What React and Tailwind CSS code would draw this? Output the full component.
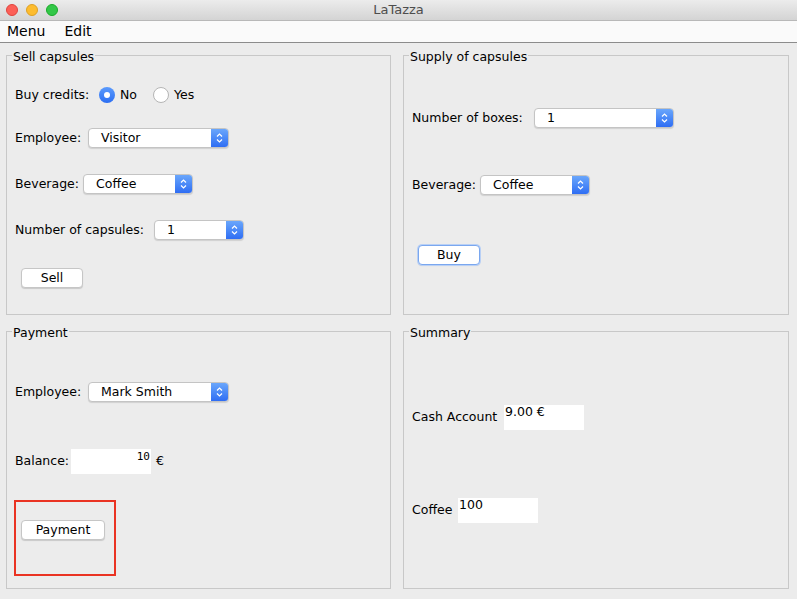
import React from 'react';

const font = "font-['DejaVu_Sans',sans-serif]";

const Combo = ({ value, width }) => (
  <div
    className={`flex h-[20px] items-stretch rounded-[4px] border border-[#c4c4c4] bg-white shadow-[0_1px_1px_rgba(0,0,0,0.12)] ${width}`}
  >
    <span className="flex-1 pl-[12px] leading-[18px]">{value}</span>
    <span className="flex w-[17px] items-center justify-center rounded-r-[3px] bg-gradient-to-b from-[#6aa6fb] to-[#2f6df3]">
      <svg width="7" height="12" viewBox="0 0 7 12" fill="none" stroke="white" strokeWidth="1.2">
        <path d="M1 4.5 L3.5 2 L6 4.5" />
        <path d="M1 7.5 L3.5 10 L6 7.5" />
      </svg>
    </span>
  </div>
);

const Button = ({ children, width, focused }) => (
  <button
    className={`h-[20px] rounded-[4px] bg-white text-center leading-[18px] shadow-[0_1px_1px_rgba(0,0,0,0.15)] ${width} ${
      focused ? 'border border-[#7aa7ef] ring-1 ring-[#b9d0f5]' : 'border border-[#c6c6c6]'
    }`}
  >
    {children}
  </button>
);

const Panel = ({ title, height, children }) => (
  <fieldset className={`border border-[#c8c8c8] px-[8px] ${height}`}>
    <legend className="-ml-[3px] h-[14px] px-px leading-[18px] text-[12.5px]">{title}</legend>
    {children}
  </fieldset>
);

// label column width = distance from the label start to the control start
const Row = ({ label, labelWidth, className = '', children }) => (
  <div className={`flex items-center ${className}`}>
    <span className={`shrink-0 whitespace-nowrap ${labelWidth}`}>{label}</span>
    {children}
  </div>
);

const Field = ({ children, width, className = '' }) => (
  <div className={`h-[25px] bg-white ${width} ${className}`}>{children}</div>
);

export default function App() {
  return (
    <div className={`flex h-[599px] w-[797px] flex-col bg-[#ececec] text-[12.5px] text-black ${font}`}>
      {/* title bar */}
      <div className="relative flex h-[21px] items-center justify-center border-b border-[#b8b8b8] bg-gradient-to-b from-[#ececec] to-[#d4d4d4]">
        <div className="absolute left-[6px] top-[4px] flex gap-[8px]">
          <span className="h-[12px] w-[12px] rounded-full bg-[#fc5f57] border border-[#e0443e]" />
          <span className="h-[12px] w-[12px] rounded-full bg-[#fdbc2e] border border-[#dea123]" />
          <span className="h-[12px] w-[12px] rounded-full bg-[#33c748] border border-[#1aab29]" />
        </div>
        <span className="text-[13px] text-[#4d4d4d]">LaTazza</span>
      </div>

      {/* menu bar */}
      <div className="flex h-[22px] items-center gap-[19px] border-b border-[#8c8c8c] bg-[#fafafa] pl-[7px] text-[14px]">
        <span>Menu</span>
        <span>Edit</span>
      </div>

      <div className="grid grid-cols-[385px_386px] items-start gap-x-[12px] gap-y-[9px] pl-[6px] pt-[5px]">
        <Panel title="Sell capsules" height="h-[267px]">
          <Row label="Buy credits:" labelWidth="w-[84px]" className="mt-[23px] h-[20px]">
            <span className="flex h-[16px] w-[16px] items-center justify-center rounded-full bg-gradient-to-b from-[#5b9afc] to-[#2c6ef2]">
              <span className="h-[6px] w-[6px] rounded-full bg-white" />
            </span>
            <span className="ml-[5px]">No</span>
            <span className="ml-[16px] h-[16px] w-[16px] rounded-full border border-[#b5b5b5] bg-white" />
            <span className="ml-[5px]">Yes</span>
          </Row>
          <Row label="Employee:" labelWidth="w-[73px]" className="mt-[23px]">
            <Combo value="Visitor" width="w-[141px]" />
          </Row>
          <Row label="Beverage:" labelWidth="w-[68px]" className="mt-[26px]">
            <Combo value="Coffee" width="w-[110px]" />
          </Row>
          <Row label="Number of capsules:" labelWidth="w-[139px]" className="mt-[26px]">
            <Combo value="1" width="w-[90px]" />
          </Row>
          <div className="mt-[28px] pl-[6px]">
            <Button width="w-[62px]">Sell</Button>
          </div>
        </Panel>

        <Panel title="Supply of capsules" height="h-[267px]">
          <Row label="Number of boxes:" labelWidth="w-[122px]" className="mt-[46px]">
            <Combo value="1" width="w-[140px]" />
          </Row>
          <Row label="Beverage:" labelWidth="w-[68px]" className="mt-[47px]">
            <Combo value="Coffee" width="w-[110px]" />
          </Row>
          <div className="mt-[50px] pl-[6px]">
            <Button width="w-[62px]" focused>Buy</Button>
          </div>
        </Panel>

        <Panel title="Payment" height="h-[265px]">
          <Row label="Employee:" labelWidth="w-[73px]" className="mt-[44px]">
            <Combo value="Mark Smith" width="w-[141px]" />
          </Row>
          <Row label="Balance:" labelWidth="w-[56px]" className="mt-[47px]">
            <Field width="w-[80px]" className="pr-[1px] pt-[1px] text-right font-['DejaVu_Sans_Mono',monospace] text-[11px] leading-[14px]">
              10
            </Field>
            <span className="ml-[5px]">€</span>
          </Row>
          <div className="-ml-px mt-[26px] h-[76px] w-[102px] border-2 border-[#ea3323] pl-[5px] pt-[18px]">
            <Button width="w-[84px]">Payment</Button>
          </div>
        </Panel>

        <Panel title="Summary" height="h-[265px]">
          <Row label="Cash Account" labelWidth="w-[92px]" className="mt-[67px]">
            <Field width="w-[80px]" className="pl-[1px] leading-[14px]">9.00 €</Field>
          </Row>
          <Row label="Coffee" labelWidth="w-[46px]" className="mt-[68px]">
            <Field width="w-[80px]" className="pl-[1px] leading-[14px]">100</Field>
          </Row>
        </Panel>
      </div>
    </div>
  );
}
